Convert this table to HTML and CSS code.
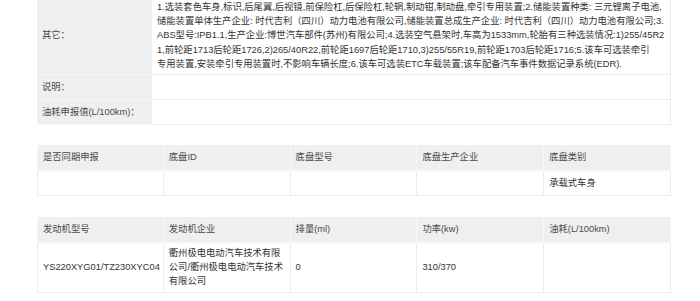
FILE: index.html
```html
<!DOCTYPE html>
<html lang="zh-CN">
<head>
<meta charset="utf-8">
<title>车辆参数</title>
<link rel="stylesheet" href="styles.css">
</head>
<body>
<div class="page">
  <table class="info">
    <colgroup><col class="c-label"><col></colgroup>
    <tr class="r-other">
      <th>其它：</th>
      <td><div class="lines">1.选装套色车身,标识,后尾翼,后视镜,前保险杠,后保险杠,轮辋,制动钳,制动盘,牵引专用装置;2.储能装置种类: 三元锂离子电池,<br>储能装置单体生产企业: 时代吉利（四川）动力电池有限公司,储能装置总成生产企业: 时代吉利（四川）动力电池有限公司;3.<br>ABS型号:IPB1.1,生产企业:博世汽车部件(苏州)有限公司;4.选装空气悬架时,车高为1533mm,轮胎有三种选装情况:1)255/45R2<br>1,前轮距1713后轮距1726,2)265/40R22,前轮距1697后轮距1710,3)255/55R19,前轮距1703后轮距1716;5.该车可选装牵引<br>专用装置,安装牵引专用装置时,不影响车辆长度;6.该车可选装ETC车载装置;该车配备汽车事件数据记录系统(EDR).</div></td>
    </tr>
    <tr class="r-single">
      <th>说明：</th>
      <td></td>
    </tr>
    <tr class="r-single">
      <th>油耗申报值(L/100km)：</th>
      <td></td>
    </tr>
  </table>

  <table class="grid">
    <tr class="r-head">
      <th>是否同期申报</th>
      <th>底盘ID</th>
      <th>底盘型号</th>
      <th>底盘生产企业</th>
      <th>底盘类别</th>
    </tr>
    <tr class="r-single">
      <td></td>
      <td></td>
      <td></td>
      <td></td>
      <td>承载式车身</td>
    </tr>
  </table>

  <table class="grid">
    <tr class="r-head">
      <th>发动机型号</th>
      <th>发动机企业</th>
      <th>排量(ml)</th>
      <th>功率(kw)</th>
      <th>油耗(L/100km)</th>
    </tr>
    <tr class="r-single">
      <td>YS220XYG01/TZ230XYC04</td>
      <td>衢州极电电动汽车技术有限公司/衢州极电电动汽车技术有限公司</td>
      <td>0</td>
      <td>310/370</td>
      <td></td>
    </tr>
  </table>
</div>
</body>
</html>
```
FILE: styles.css
```css
html, body {
  margin: 0;
  padding: 0;
  background: #ffffff;
}

body {
  font-family: "Liberation Sans", "Noto Sans CJK SC", sans-serif;
  font-size: 9.3px;
  line-height: 14.2px;
  color: #333333;
}

.page {
  margin-top: -3px;
  padding-left: 37px;
  display: flex;
  flex-direction: column;
  gap: 20px;
  align-items: flex-start;
}

table {
  border-collapse: separate;
  border-spacing: 0;
  table-layout: fixed;
  width: 634px;
}

th, td {
  padding: 3px 5px;
  text-align: left;
  vertical-align: middle;
  font-weight: normal;
  border-right: 1px solid #ececec;
  border-bottom: 1px solid #ececec;
}

th {
  background: #efefef;
  color: #4a4a4a;
  border-right-color: #f7f7f7;
  border-bottom-color: #f7f7f7;
}

.info .c-label {
  width: 115px;
}

.info th {
  border-right: none;
}

.lines {
  white-space: nowrap;
  word-break: break-all;
}

.r-single {
  height: 25px;
}

.r-head {
  height: 26px;
}

.grid th:first-child,
.grid td:first-child {
  border-left: 1px solid #ececec;
}

.grid th:first-child {
  border-left-color: #f7f7f7;
}

.grid + .grid {
  margin-top: 1px;
}
```
